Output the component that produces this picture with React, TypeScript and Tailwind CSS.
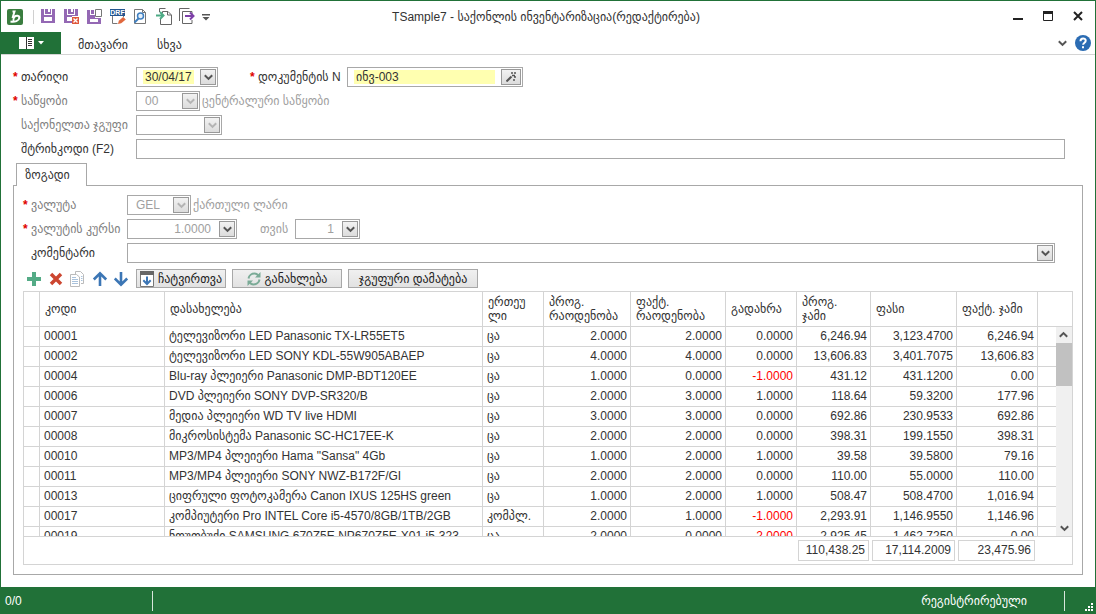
import type { ReactNode } from 'react';

type Row = [string, string, string, string, string, string, string, string, string];

const rows: Row[] = [
  ['00001', 'ტელევიზორი LED Panasonic TX-LR55ET5', 'ცა', '2.0000', '2.0000', '0.0000', '6,246.94', '3,123.4700', '6,246.94'],
  ['00002', 'ტელევიზორი LED SONY KDL-55W905ABAEP', 'ცა', '4.0000', '4.0000', '0.0000', '13,606.83', '3,401.7075', '13,606.83'],
  ['00004', 'Blu-ray პლეიერი Panasonic DMP-BDT120EE', 'ცა', '1.0000', '0.0000', '-1.0000', '431.12', '431.1200', '0.00'],
  ['00006', 'DVD პლეიერი SONY DVP-SR320/B', 'ცა', '2.0000', '3.0000', '1.0000', '118.64', '59.3200', '177.96'],
  ['00007', 'მედია პლეიერი WD TV live HDMI', 'ცა', '3.0000', '3.0000', '0.0000', '692.86', '230.9533', '692.86'],
  ['00008', 'მიკროსისტემა Panasonic SC-HC17EE-K', 'ცა', '2.0000', '2.0000', '0.0000', '398.31', '199.1550', '398.31'],
  ['00010', 'MP3/MP4 პლეიერი Hama "Sansa" 4Gb', 'ცა', '1.0000', '2.0000', '1.0000', '39.58', '39.5800', '79.16'],
  ['00011', 'MP3/MP4 პლეიერი SONY NWZ-B172F/GI', 'ცა', '2.0000', '2.0000', '0.0000', '110.00', '55.0000', '110.00'],
  ['00013', 'ციფრული ფოტოკამერა Canon IXUS 125HS green', 'ცა', '1.0000', '2.0000', '1.0000', '508.47', '508.4700', '1,016.94'],
  ['00017', 'კომპიუტერი Pro INTEL Core i5-4570/8GB/1TB/2GB', 'კომპლ.', '2.0000', '1.0000', '-1.0000', '2,293.91', '1,146.9550', '1,146.96'],
  ['00019', 'ნოუთბუქი SAMSUNG 670Z5E NP670Z5E-X01 i5-323', 'ცა', '2.0000', '0.0000', '-2.0000', '2,925.45', '1,462.7250', '0.00'],
];

const headers: string[][] = [[''], ['კოდი'], ['დასახელება'], ['ერთეუ', 'ლი'], ['პროგ.', 'რაოდენობა'], ['ფაქტ.', 'რაოდენობა'], ['გადახრა'], ['პროგ.', 'ჯამი'], ['ფასი'], ['ფაქტ. ჯამი'], ['']];

function Chevron() {
  return (
    <svg width="9" height="7" viewBox="0 0 9 7" fill="none" stroke="currentColor" strokeWidth="2">
      <path d="M0.8 1.2 4.5 4.9 8.2 1.2" />
    </svg>
  );
}

const dropFace = 'flex h-4 w-4 shrink-0 items-center justify-center border border-[#999] bg-linear-to-b from-[#f2f2f2] to-[#dcdcdc]';

function DropButton({ label, disabled }: { label: string; disabled?: boolean }) {
  return (
    <button type="button" aria-label={label} disabled={disabled} className={`${dropFace} ${disabled ? 'text-[#b4b4b4]' : 'text-[#555]'}`}>
      <Chevron />
    </button>
  );
}

function Field({ className, children }: { className: string; children: ReactNode }) {
  return <div className={`flex h-5 min-w-0 items-center border border-[#a8a8a8] bg-white px-px ${className}`}>{children}</div>;
}

function DisabledSelect({ id, value, className }: { id: string; value: string; className: string }) {
  return (
    <Field className={`relative ${className}`}>
      <select id={id} disabled className="h-4 w-full appearance-none bg-white pl-[7px] leading-4 text-[#a0a0a0] opacity-100">
        <option>{value}</option>
      </select>
      <span className={`pointer-events-none absolute right-px ${dropFace} text-[#b4b4b4]`}>
        <Chevron />
      </span>
    </Field>
  );
}

function Label({ htmlFor, required, muted, className, children }: { htmlFor: string; required?: boolean; muted?: boolean; className: string; children: ReactNode }) {
  return (
    <label htmlFor={htmlFor} className={`flex h-5 shrink-0 items-center whitespace-nowrap ${muted ? 'text-[#808080]' : 'text-[#333]'} ${className}`}>
      <span className="w-2 shrink-0 font-bold text-[#e00000]">{required ? '*' : ''}</span>
      {children}
    </label>
  );
}

function QuickButton({ label, children }: { label: string; children: ReactNode }) {
  return (
    <button type="button" aria-label={label} className="h-[18px] w-4">
      <svg width="16" height="18" viewBox="0 0 16 18" fill="none">
        {children}
      </svg>
    </button>
  );
}

function ToolButton({ label, children }: { label: string; children: ReactNode }) {
  return (
    <button type="button" aria-label={label} className="h-4 w-4">
      <svg width="16" height="16" viewBox="0 0 16 16" fill="none">
        {children}
      </svg>
    </button>
  );
}

function QuickAccess() {
  return (
    <div className="flex items-center gap-[7px]">
      <QuickButton label="Save">
        <path d="M0 1h3v6h8V1h3v14H0z" fill="#9468b4" />
        <path d="M4 1h6v5H4z" fill="#9468b4" />
        <path d="M7 1h2v3H7z" fill="#fff" />
        <path d="M3 9h8v4H3z" fill="#fff" />
      </QuickButton>
      <QuickButton label="Save and close">
        <path d="M0 1h3v6h8V1h3v7H8v7H0z" fill="#9468b4" />
        <path d="M4 1h6v5H4z" fill="#9468b4" />
        <path d="M7 1h2v3H7zM3 9h5v4H3z" fill="#fff" />
        <path d="M8 9h7v7H8z" fill="#e0583c" />
        <path d="m9.500 10.500 4 4m0-4-4 4" stroke="#fff" strokeWidth="1.300" />
      </QuickButton>
      <QuickButton label="Save and new">
        <path d="M0 2h3v5h5v3h6v6H0z" fill="#9468b4" />
        <path d="M4 2h3v4H4z" fill="#9468b4" />
        <path d="M3 11h8v3H3z" fill="#fff" />
        <path d="M8.500 1.500h6v7h-6z" fill="#fff" stroke="#777" />
      </QuickButton>
      <QuickButton label="Save draft">
        <path d="M2.500 7v8.500h5M13.500 7v2" stroke="#777" />
        <path d="M0 1h15v7H0z" fill="#24558f" />
        <text x="7.500" y="7" textAnchor="middle" fill="#fff" fontSize="7" fontWeight="bold" fontFamily="Liberation Sans, sans-serif">DRF</text>
        <path d="m8 16 .8-3.300 4.400-3.700 2.600 2.600-4.600 3.700z" fill="#e0683e" />
      </QuickButton>
      <QuickButton label="Preview">
        <path d="M1.500 15.500V1.500h8l3 3v11z" fill="#fff" stroke="#777" />
        <path d="M9.500 1.500v3h3" stroke="#777" />
        <circle cx="7.500" cy="8" r="3" fill="#e4f0fb" stroke="#3f7fc0" strokeWidth="1.500" />
        <path d="m5.500 10.500-4 4" stroke="#3f7fc0" strokeWidth="2" />
      </QuickButton>
      <QuickButton label="Import">
        <path d="M3.500 4V0.500h6M4.500 11v5.500h11V7L12 3.500H6.500V5" stroke="#666" />
        <path d="M11.500 3.500V7H15" stroke="#666" />
        <path d="M0 7.500h7M4 4l3.500 3.500L4 11" stroke="#4dab85" strokeWidth="2" />
      </QuickButton>
      <QuickButton label="Export">
        <path d="M0.500 13V0.500h10M13 6V3.500H3.500v12H13V12" stroke="#666" />
        <path d="M6 8h8M11 4.500 14.500 8 11 11.500" stroke="#7d3fa8" strokeWidth="2" />
      </QuickButton>
      <button type="button" aria-label="Customize toolbar" className="h-4 w-2">
        <svg width="8" height="16" viewBox="0 0 8 16" fill="#555">
          <path d="M0 5h8v1.500H0zM0.500 8h7L4 11.500z" />
        </svg>
      </button>
    </div>
  );
}

function Ribbon() {
  return (
    <header className="shrink-0 border-b border-[#d4d4d4]">
      <div className="flex h-[31px] items-center pl-1.5 pr-2.5">
        <div className="flex flex-1 items-center">
          <svg width="16" height="16" viewBox="0 0 16 16" fill="none" aria-hidden="true">
            <rect width="16" height="16" rx="2" fill="#3a7d3f" />
            <path d="M5.500 2.500h2L5.500 9M3.500 12.500c4.500.8 8.500-.8 8.800-3.500.2-2.600-3-3-4.800-1.200-1.300 1.300-1.500 2.500-1 4.200" stroke="#fff" strokeWidth="2" />
          </svg>
          <span className="ml-2.5 mr-[7px] h-3.5 w-px bg-[#d0d0d0]" />
          <QuickAccess />
        </div>
        <h1 className="whitespace-nowrap font-normal leading-4 text-[#333]">TSample7 - საქონლის ინვენტარიზაცია(რედაქტირება)</h1>
        <div className="flex flex-1 items-center justify-end gap-4 text-[#222]">
          <button type="button" aria-label="Minimize"><svg width="14" height="12" viewBox="0 0 14 12"><path d="M2 7h10v2H2z" fill="currentColor" /></svg></button>
          <button type="button" aria-label="Maximize"><svg width="14" height="12" viewBox="0 0 14 12" fill="none"><path d="M2.500 1v8.500h9V1" stroke="currentColor" /><path d="M2 0h10v3H2z" fill="currentColor" /></svg></button>
          <button type="button" aria-label="Close"><svg width="14" height="12" viewBox="0 0 14 12" fill="none"><path d="m3 1 8 8m0-8-8 8" stroke="currentColor" strokeWidth="2" /></svg></button>
        </div>
      </div>
      <nav className="flex h-[22px] items-center pr-1 text-[#333]">
        <button type="button" aria-label="Application menu" className="flex h-full w-[60px] items-center justify-center gap-1 bg-[#217138]">
          <svg width="15" height="12" viewBox="0 0 15 12" fill="none">
            <path d="M0 0h15v12H0z" fill="#fff" />
            <path d="M7.500 0v12M9 2.500h4M9 4.500h4M9 6.500h4M9 8.500h4" stroke="#333" />
          </svg>
          <svg width="6" height="4" viewBox="0 0 6 4" fill="#fff"><path d="M0 0h6L3 3.500z" /></svg>
        </button>
        <a href="#main" className="ml-[17px] pt-1">მთავარი</a>
        <a href="#other" className="ml-[29px] pt-1">სხვა</a>
        <div className="ml-auto flex items-center gap-2 text-[#555]">
          <button type="button" aria-label="Collapse ribbon"><Chevron /></button>
          <button type="button" aria-label="Help">
            <svg width="16" height="16" viewBox="0 0 16 16" fill="none">
              <circle cx="8" cy="8" r="8" fill="#2b6cb3" />
              <path d="M5.500 6.200c0-3.700 5.300-3.400 5.200-.4 0 1.900-2.600 1.900-2.600 4M8 11.200v2" stroke="#fff" strokeWidth="2" />
            </svg>
          </button>
        </div>
      </nav>
    </header>
  );
}

const actionButton = 'flex h-[19px] items-center overflow-hidden whitespace-nowrap border border-[#a8a8a8] bg-linear-to-b from-[#f0f0f0] to-[#e2e2e2]';

function Toolbar() {
  return (
    <div className="flex items-center pl-3 pt-1.5">
      <div className="flex items-center gap-[6px]">
        <ToolButton label="Add"><path d="M1 8h14M8 1v14" stroke="#54ab86" strokeWidth="4" /></ToolButton>
        <ToolButton label="Delete"><path d="m3 3 10 10M13 3 3 13" stroke="#cc4630" strokeWidth="3.500" /></ToolButton>
        <ToolButton label="Copy">
          <path d="M5.500 3V0.500h5L13.500 3.500v9H11" stroke="#bbb" />
          <path d="M0.500 3.500h6L9.500 6v9.500h-9z" fill="#fff" stroke="#bbb" />
          <path d="M2 6.500h4M2 8.500h6M2 10.500h6M2 12.500h6M11 5.500h1.500M11 7.500h1.500M11 9.500h1.500" stroke="#a9c2dc" />
        </ToolButton>
      </div>
      <div className="ml-1.5 mr-1.5 flex gap-[6px]">
        <ToolButton label="Move up"><path d="M8 15V2.500M1.800 8.500 8 2.300l6.200 6.200" stroke="#3c76b5" strokeWidth="2.600" /></ToolButton>
        <ToolButton label="Move down"><path d="M7 1v12.500M0.800 7.500 7 13.700l6.200-6.200" stroke="#3c76b5" strokeWidth="2.600" /></ToolButton>
      </div>
      <div className="flex gap-[6px] text-[#222]">
        <button type="button" className={`${actionButton} w-[90px] gap-1 pl-[3px] pr-0.5`}>
          <svg className="shrink-0" width="14" height="16" viewBox="0 0 14 16" fill="none">
            <path d="M0.500 0.500h13v15H0.500z" fill="#fff" stroke="#777" />
            <path d="M0 0h14v4H0z" fill="#666" />
            <path d="M7 5.500V13M3.300 9.300 7 13l3.700-3.700" stroke="#3c76b5" strokeWidth="2" />
          </svg>
          <span className="overflow-hidden">ჩატვირთვა</span>
        </button>
        <button type="button" className={`${actionButton} w-[110px] justify-center gap-1`}>
          <svg width="14" height="14" viewBox="0 0 14 14" fill="none" stroke="#7bab97" strokeWidth="2">
            <path d="M1.500 6.500C2 3 5 1.500 7.500 1.500c1.800 0 3.200 1 4 2.500M12.500 7.500c-.5 3.500-3.500 5-6 5-1.800 0-3.200-1-4-2.500" />
            <path d="M13.500 0V5.500H8zM0.500 14V8.500H6z" fill="#7bab97" stroke="none" />
          </svg>
          განახლება
        </button>
        <button type="button" className={`${actionButton} w-[130px] justify-center`}>ჯგუფური დამატება</button>
      </div>
    </div>
  );
}

function Grid() {
  return (
    <section className="ml-[9px] mr-[9px] mt-[3px] flex min-h-0 flex-1 flex-col border border-[#d4d4d4]">
      <div className="relative min-h-0 flex-1 overflow-hidden">
        <table className="w-full table-fixed border-separate border-spacing-0 text-[#333]">
          <colgroup>
            <col className="w-4" />
            <col className="w-[125px]" />
            <col />
            <col className="w-[61px]" />
            <col className="w-[87px]" />
            <col className="w-[95px]" />
            <col className="w-[71px]" />
            <col className="w-[74px]" />
            <col className="w-[86px]" />
            <col className="w-[81px]" />
            <col className="w-[34px]" />
          </colgroup>
          <thead>
            <tr className="h-[35px]">
              {headers.map((lines, i) => (
                <th key={i} scope="col" className="whitespace-nowrap border-b border-r border-[#d4d4d4] py-0 pl-[5px] pr-0 text-left align-middle font-normal leading-[14px] last:border-r-0">
                  {lines[0]}
                  {lines[1] && <><br />{lines[1]}</>}
                </th>
              ))}
            </tr>
          </thead>
          <tbody>
            {rows.map((r) => (
              <tr key={r[0]} className="h-5">
                <td className="border-b border-r border-[#d4d4d4]" />
                {r.map((v, i) => (
                  <td
                    key={i}
                    className={`overflow-hidden whitespace-nowrap border-b border-r border-[#d4d4d4] p-0 leading-[19px] ${i > 2 ? 'pr-[3px] text-right' : 'pl-1'} ${v.startsWith('-') ? 'text-[#ff0000]' : ''}`}
                  >
                    {v}
                  </td>
                ))}
                <td className="border-b border-[#d4d4d4]" />
              </tr>
            ))}
          </tbody>
        </table>
        <div className="absolute bottom-0 right-0 top-[35px] flex w-4 flex-col items-center bg-[#f0f0f0] text-[#555]">
          <button type="button" aria-label="Scroll up" className="flex h-4 w-full rotate-180 items-center justify-center"><Chevron /></button>
          <div className="h-[43px] w-full bg-[#c1c1c1]" />
          <button type="button" aria-label="Scroll down" className="mt-auto flex h-4 w-full items-center justify-center"><Chevron /></button>
        </div>
      </div>
      <div className="flex h-7 shrink-0 items-center justify-end gap-[3px] border-t border-[#d4d4d4] pr-[37px] text-right leading-[19px] text-[#333]">
        <output className="w-[71px] border border-[#d4d4d4] pr-[3px]">110,438.25</output>
        <output className="w-[83px] border border-[#d4d4d4] pr-[3px]">17,114.2009</output>
        <output className="w-[77px] border border-[#d4d4d4] pr-[3px]">23,475.96</output>
      </div>
    </section>
  );
}

export default function App() {
  return (
    <div className="flex h-screen flex-col border-x border-t border-[#217138] bg-white font-['Liberation_Sans','DejaVu_Sans',sans-serif] text-[12px] leading-4">
      <Ribbon />
      <main className="flex min-h-0 flex-1 flex-col px-3 pb-3 pt-3">
        <form className="flex min-h-0 flex-1 flex-col" onSubmit={(e) => e.preventDefault()}>
          <div className="flex flex-col gap-1">
            <div className="flex">
              <Label htmlFor="date" required className="w-[123px]">თარიღი</Label>
              <Field className="w-[82px] pl-1.5">
                <input id="date" defaultValue="30/04/17" className="mr-1.5 h-3.5 w-full min-w-0 bg-[#ffffb0] pl-0.5 text-[#333]" />
                <DropButton label="Choose date" />
              </Field>
              <Label htmlFor="number" required className="ml-8 w-[97px]">დოკუმენტის N</Label>
              <Field className="w-44 pl-1.5">
                <input id="number" defaultValue="ინვ-003" className="mr-1.5 h-3.5 w-full min-w-0 bg-[#ffffb0] pl-0.5 text-[#333]" />
                <button type="button" aria-label="Generate number" className="flex h-4 w-5 shrink-0 items-center justify-center border border-[#999] bg-linear-to-b from-[#f2f2f2] to-[#dcdcdc]">
                  <svg width="10" height="10" viewBox="0 0 10 10" fill="none" stroke="#555">
                    <path d="m0.500 9.500 5-5" strokeWidth="2" />
                    <path d="M5 1h2M8 1h2M8 5h2M6 3.500h3M7 8h2" strokeWidth="1.500" />
                  </svg>
                </button>
              </Field>
            </div>
            <div className="flex">
              <Label htmlFor="store" required muted className="w-[123px]">საწყობი</Label>
              <DisabledSelect id="store" value="00" className="w-16" />
              <span className="ml-0.5 flex items-center text-[#a0a0a0]">ცენტრალური საწყობი</span>
            </div>
            <div className="flex">
              <Label htmlFor="group" muted className="w-[123px]">საქონელთა ჯგუფი</Label>
              <DisabledSelect id="group" value="" className="w-[86px]" />
            </div>
            <div className="flex pr-[18px]">
              <Label htmlFor="barcode" className="w-[123px]">შტრიხკოდი (F2)</Label>
              <Field className="flex-1"><input id="barcode" className="w-full px-1" /></Field>
            </div>
          </div>

          <div role="tablist" className="relative z-10 mt-1 flex pl-[3px]">
            <button type="button" role="tab" aria-selected="true" className="-mb-px h-[23px] w-[71px] border border-b-0 border-[#a8a8a8] bg-white pr-2 text-[#333]">ზოგადი</button>
          </div>
          <div role="tabpanel" className="flex min-h-0 flex-1 flex-col border border-[#a8a8a8] pb-[9px] pt-[9px]">
            <div className="flex flex-col gap-1 pl-[9px] pr-[27px]">
              <div className="flex">
                <Label htmlFor="currency" required muted className="w-[104px]">ვალუტა</Label>
                <DisabledSelect id="currency" value="GEL" className="w-16" />
                <span className="ml-0.5 flex items-center text-[#a0a0a0]">ქართული ლარი</span>
              </div>
              <div className="flex">
                <Label htmlFor="rate" required muted className="w-[104px]">ვალუტის კურსი</Label>
                <Field className="w-[110px]">
                  <input id="rate" defaultValue="1.0000" className="w-full min-w-0 pr-2 text-right text-[#a0a0a0]" />
                  <DropButton label="Choose rate" />
                </Field>
                <label htmlFor="month" className="ml-[23px] flex w-[35px] items-center text-[#a0a0a0]">თვის</label>
                <Field className="w-[65px]">
                  <input id="month" defaultValue="1" className="w-full min-w-0 pr-2 text-right text-[#a0a0a0]" />
                  <DropButton label="Choose month" />
                </Field>
              </div>
              <div className="flex">
                <Label htmlFor="comment" className="w-[104px]">კომენტარი</Label>
                <Field className="flex-1">
                  <input id="comment" className="w-full min-w-0 px-1" />
                  <DropButton label="Choose comment" />
                </Field>
              </div>
            </div>
            <Toolbar />
            <Grid />
          </div>
        </form>
      </main>
      <footer className="flex h-[27px] shrink-0 items-center bg-[#217138] pl-1 text-white">
        <span className="w-[147px]">0/0</span>
        <span className="h-5 w-px bg-[#d8e6dc]" />
        <span className="ml-auto">რეგისტრირებული</span>
        <span className="ml-[37px] h-5 w-px bg-[#d8e6dc]" />
        <svg className="ml-5 self-end" width="10" height="12" viewBox="0 0 10 12" fill="#fff">
          <path d="M6 1h2v2H6zM3 4h2v2H3zM6 4h2v2H6zM0 7h2v2H0zM3 7h2v2H3zM6 7h2v2H6z" />
        </svg>
      </footer>
    </div>
  );
}
